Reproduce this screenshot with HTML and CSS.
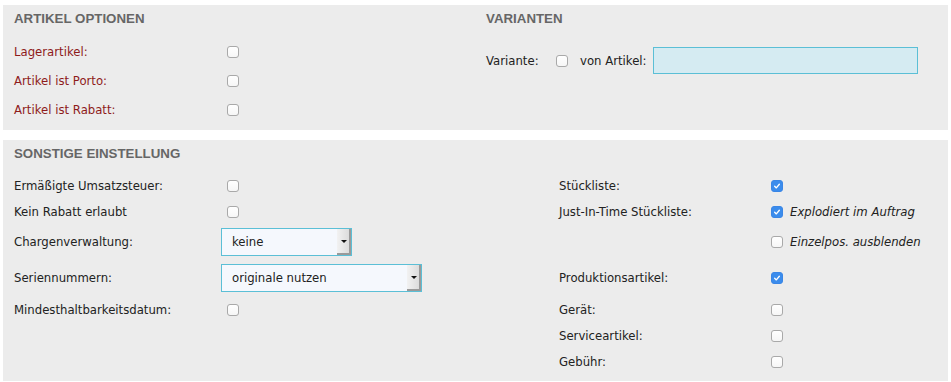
FILE: index.html
```html
<!DOCTYPE html>
<html lang="de">
<head>
<meta charset="UTF-8">
<meta name="viewport" content="width=device-width, initial-scale=1.0">
<title>Artikel Einstellungen</title>
<link rel="stylesheet" href="styles.css">
</head>
<body>
<div class="panel panel-top">
  <div class="col col-left">
    <h2 class="panel-title">ARTIKEL OPTIONEN</h2>
    <div class="opt-row">
      <span class="opt-label red">Lagerartikel:</span>
      <span class="cb"></span>
    </div>
    <div class="opt-row">
      <span class="opt-label red">Artikel ist Porto:</span>
      <span class="cb"></span>
    </div>
    <div class="opt-row">
      <span class="opt-label red">Artikel ist Rabatt:</span>
      <span class="cb"></span>
    </div>
  </div>
  <div class="col col-right">
    <h2 class="panel-title">VARIANTEN</h2>
    <div class="variant-row">
      <span class="variant-label">Variante:</span>
      <span class="cb"></span>
      <span class="variant-of">von Artikel:</span>
      <input type="text" class="variant-input">
    </div>
  </div>
</div>

<div class="panel panel-bottom">
  <h2 class="panel-title">SONSTIGE EINSTELLUNG</h2>
  <div class="settings">
    <span class="opt-label">Ermäßigte Umsatzsteuer:</span>
    <span class="ctrl"><span class="cb"></span></span>
    <span class="opt-label">Stückliste:</span>
    <span class="ctrl"><span class="cb checked"><svg viewBox="0 0 12 12"><path d="M3.2 6.3l2 2 3.6-4.4"/></svg></span></span>

    <span class="opt-label">Kein Rabatt erlaubt</span>
    <span class="ctrl"><span class="cb"></span></span>
    <span class="opt-label">Just-In-Time Stückliste:</span>
    <span class="ctrl"><span class="cb checked"><svg viewBox="0 0 12 12"><path d="M3.2 6.3l2 2 3.6-4.4"/></svg></span><em class="note">Explodiert im Auftrag</em></span>

    <span class="opt-label">Chargenverwaltung:</span>
    <span class="ctrl"><span class="select select-short">keine<span class="select-btn"></span></span></span>
    <span class="opt-label"></span>
    <span class="ctrl"><span class="cb"></span><em class="note">Einzelpos. ausblenden</em></span>

    <span class="opt-label">Seriennummern:</span>
    <span class="ctrl"><span class="select select-long">originale nutzen<span class="select-btn"></span></span></span>
    <span class="opt-label">Produktionsartikel:</span>
    <span class="ctrl"><span class="cb checked"><svg viewBox="0 0 12 12"><path d="M3.2 6.3l2 2 3.6-4.4"/></svg></span></span>

    <span class="opt-label">Mindesthaltbarkeitsdatum:</span>
    <span class="ctrl"><span class="cb"></span></span>
    <span class="opt-label">Gerät:</span>
    <span class="ctrl"><span class="cb"></span></span>

    <span class="opt-label"></span>
    <span class="ctrl"></span>
    <span class="opt-label">Serviceartikel:</span>
    <span class="ctrl"><span class="cb"></span></span>

    <span class="opt-label"></span>
    <span class="ctrl"></span>
    <span class="opt-label">Gebühr:</span>
    <span class="ctrl"><span class="cb"></span></span>
  </div>
</div>
</body>
</html>
```

FILE: styles.css
```css
body {
  margin: 0;
  padding: 5px 3px 0 3px;
  background: #fff;
  font-family: "DejaVu Sans", Verdana, sans-serif;
  font-size: 11.7px;
  color: #222;
}
.panel {
  background: #ececec;
  width: 934px;
  padding: 6px 0 6px 11px;
}
.panel-top {
  display: grid;
  grid-template-columns: 472px auto;
  height: 113px;
  margin-bottom: 10px;
}
.panel-title {
  margin: 0 0 10px 0;
  font-family: "Liberation Sans", Arial, sans-serif;
  font-size: 13.3px;
  line-height: 16px;
  font-weight: bold;
  color: #666;
}
.opt-row {
  display: grid;
  grid-template-columns: 207px auto;
  align-items: center;
  height: 29px;
}
.opt-label {
  display: flex;
  align-items: center;
}
.red {
  color: #8e1b1b;
}
.cb {
  display: inline-block;
  box-sizing: border-box;
  width: 12px;
  height: 12px;
  margin-left: 6px;
  border: 1px solid #a9a9a9;
  border-radius: 3px;
  background: linear-gradient(#fff, #f6f6f6);
  vertical-align: middle;
}
.cb.checked {
  border-color: #3a86e6;
  background: #3b8cec;
}
.cb svg {
  display: block;
  width: 10px;
  height: 10px;
}
.cb svg path {
  fill: none;
  stroke: #fff;
  stroke-width: 1.6;
  stroke-linecap: round;
  stroke-linejoin: round;
}
.variant-row {
  display: flex;
  align-items: center;
  margin-top: 20px;
}
.variant-label {
  width: 64px;
}
.variant-row .cb {
  margin-left: 6px;
}
.variant-of {
  margin-left: 12px;
  width: 73px;
}
.variant-input {
  box-sizing: border-box;
  width: 265px;
  height: 27px;
  margin: 0;
  border: 1px solid #5bbfd6;
  background: #d5ebf2;
  outline: none;
}
.settings {
  display: grid;
  grid-template-columns: 207px 338px 206px auto;
  grid-template-rows: 26px 26px 34px 38px 26px 26px 26px;
  margin-top: 11px;
}
.ctrl {
  display: flex;
  align-items: center;
}
.note {
  margin-left: 7px;
  font-style: italic;
}
.select {
  position: relative;
  box-sizing: border-box;
  display: flex;
  align-items: center;
  height: 28px;
  padding-left: 10px;
  border: 1px solid #5bbfd6;
  background: #f5f8fd;
}
.select-short {
  width: 131px;
}
.select-long {
  width: 201px;
}
.select-btn {
  position: absolute;
  right: 0;
  top: 0;
  bottom: 0;
  width: 14px;
  background: linear-gradient(to right, #f2f2f2, #dcdcdc);
  border-right: 2px solid #9a9a9a;
  border-bottom: 2px solid #9a9a9a;
  box-sizing: border-box;
}
.select-btn::after {
  content: "";
  position: absolute;
  left: 4px;
  top: 11px;
  border-left: 3px solid transparent;
  border-right: 3px solid transparent;
  border-top: 3px solid #111;
}
```
